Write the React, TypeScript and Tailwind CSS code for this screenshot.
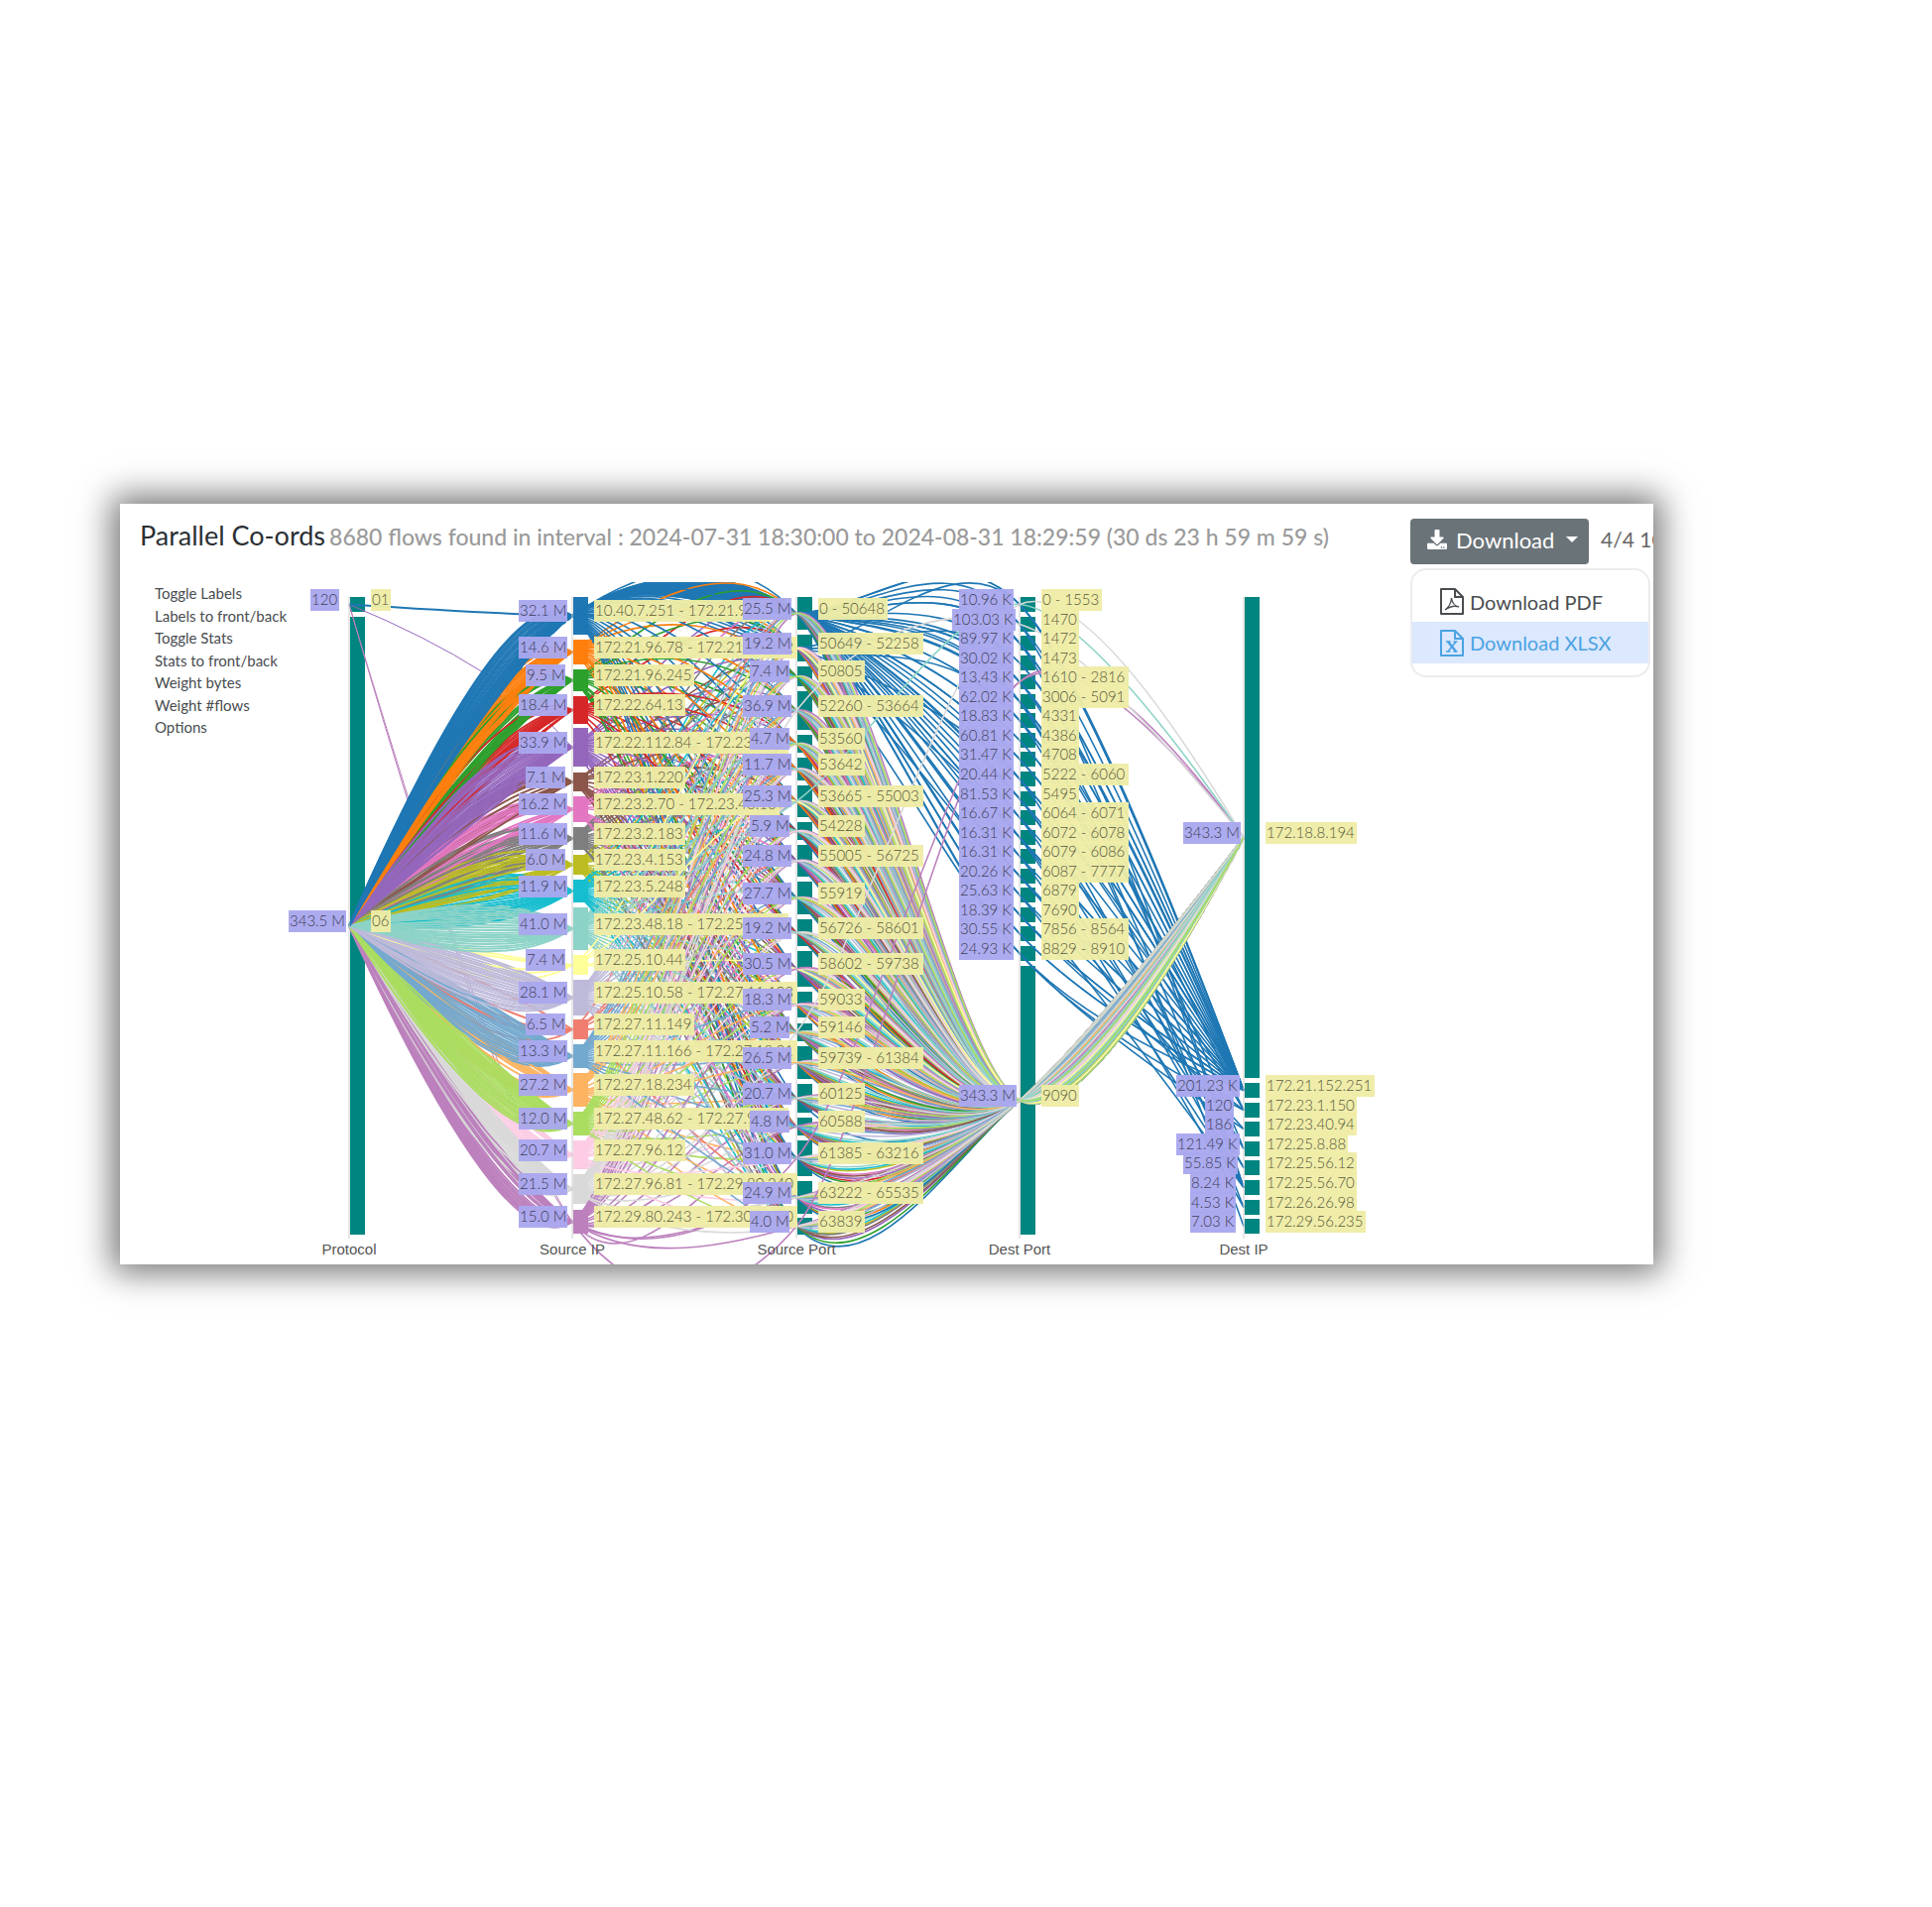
import { useState } from "react";
import { FaDownload } from "react-icons/fa";

interface AxisNode {
  y: number;
  h: number;
  value: string;
  label: string;
  color?: string;
}

interface Axis {
  title: string;
  x: number;
  nodes: AxisNode[];
}

interface Curve {
  color: string;
  d: string;
  order: number;
}

const TEAL = "#008580";

const node = (
  y: number,
  bottom: number,
  value: string,
  label: string,
  color?: string
): AxisNode => ({ y, h: bottom - y, value, label, color });

const protocols: AxisNode[] = [
  node(602, 617, "120", "01"),
  node(622, 1245, "343.5 M", "06"),
];

const sourceIps: AxisNode[] = [
  node(602, 640, "32.1 M", "10.40.7.251 - 172.21.96.7", "#1f77b4"),
  node(645, 670, "14.6 M", "172.21.96.78 - 172.21.96.242", "#ff7f0e"),
  node(675, 697, "9.5 M", "172.21.96.245", "#2ca02c"),
  node(702, 730, "18.4 M", "172.22.64.13", "#d62728"),
  node(734, 773, "33.9 M", "172.22.112.84 - 172.23.1.22", "#9467bd"),
  node(779, 798, "7.1 M", "172.23.1.220", "#8c564b"),
  node(803, 829, "16.2 M", "172.23.2.70 - 172.23.48.16", "#e377c2"),
  node(834, 857, "11.6 M", "172.23.2.183", "#7f7f7f"),
  node(862, 882, "6.0 M", "172.23.4.153", "#bcbd22"),
  node(887, 910, "11.9 M", "172.23.5.248", "#17becf"),
  node(915, 958, "41.0 M", "172.23.48.18 - 172.25.10.42", "#8dd3c7"),
  node(963, 983, "7.4 M", "172.25.10.44", "#ffff99"),
  node(988, 1024, "28.1 M", "172.25.10.58 - 172.27.11.103", "#bebada"),
  node(1028, 1048, "6.5 M", "172.27.11.149", "#f07e70"),
  node(1053, 1077, "13.3 M", "172.27.11.166 - 172.27.18.21", "#74a9cf"),
  node(1082, 1116, "27.2 M", "172.27.18.234", "#fdb462"),
  node(1121, 1145, "12.0 M", "172.27.48.62 - 172.27.96.10", "#aadd60"),
  node(1150, 1179, "20.7 M", "172.27.96.12", "#fccde5"),
  node(1184, 1214, "21.5 M", "172.27.96.81 - 172.29.80.240", "#d9d9d9"),
  node(1220, 1244, "15.0 M", "172.29.80.243 - 172.30.11.20", "#bc80bd"),
];

const sourcePorts: AxisNode[] = [
  node(602, 635, "25.5 M", "0 - 50648"),
  node(640, 667, "19.2 M", "50649 - 52258"),
  node(672, 692, "7.4 M", "50805"),
  node(697, 736, "36.9 M", "52260 - 53664"),
  node(741, 759, "4.7 M", "53560"),
  node(764, 787, "11.7 M", "53642"),
  node(792, 824, "25.3 M", "53665 - 55003"),
  node(829, 847, "5.9 M", "54228"),
  node(852, 884, "24.8 M", "55005 - 56725"),
  node(889, 922, "27.7 M", "55919"),
  node(927, 954, "19.2 M", "56726 - 58601"),
  node(959, 995, "30.5 M", "58602 - 59738"),
  node(1000, 1026, "18.3 M", "59033"),
  node(1032, 1050, "5.2 M", "59146"),
  node(1055, 1088, "26.5 M", "59739 - 61384"),
  node(1093, 1122, "20.7 M", "60125"),
  node(1127, 1145, "4.8 M", "60588"),
  node(1150, 1186, "31.0 M", "61385 - 63216"),
  node(1191, 1224, "24.9 M", "63222 - 65535"),
  node(1228, 1245, "4.0 M", "63839"),
];

const smallPorts: [string, string][] = [
  ["10.96 K", "0 - 1553"],
  ["103.03 K", "1470"],
  ["89.97 K", "1472"],
  ["30.02 K", "1473"],
  ["13.43 K", "1610 - 2816"],
  ["62.02 K", "3006 - 5091"],
  ["18.83 K", "4331"],
  ["60.81 K", "4386"],
  ["31.47 K", "4708"],
  ["20.44 K", "5222 - 6060"],
  ["81.53 K", "5495"],
  ["16.67 K", "6064 - 6071"],
  ["16.31 K", "6072 - 6078"],
  ["16.31 K", "6079 - 6086"],
  ["20.26 K", "6087 - 7777"],
  ["25.63 K", "6879"],
  ["18.39 K", "7690"],
  ["30.55 K", "7856 - 8564"],
  ["24.93 K", "8829 - 8910"],
];

const destPorts: AxisNode[] = [
  ...smallPorts.map(([value, label], i) => {
    const y = Math.round(602 + i * 19.55);
    return node(y, y + 15, value, label);
  }),
  node(974, 1245, "343.3 M", "9090"),
];

const smallIps: [string, string][] = [
  ["201.23 K", "172.21.152.251"],
  ["120", "172.23.1.150"],
  ["186", "172.23.40.94"],
  ["121.49 K", "172.25.8.88"],
  ["55.85 K", "172.25.56.12"],
  ["8.24 K", "172.25.56.70"],
  ["4.53 K", "172.26.26.98"],
  ["7.03 K", "172.29.56.235"],
];

const destIps: AxisNode[] = [
  node(602, 1087, "343.3 M", "172.18.8.194"),
  ...smallIps.map(([value, label], i) => {
    const y = Math.round(1092 + i * 19.6);
    return node(y, y + 15, value, label);
  }),
];

const axes: Axis[] = [
  { title: "Protocol", x: 353, nodes: protocols },
  { title: "Source IP", x: 578, nodes: sourceIps },
  { title: "Source Port", x: 804, nodes: sourcePorts },
  { title: "Dest Port", x: 1029, nodes: destPorts },
  { title: "Dest IP", x: 1255, nodes: destIps },
];

// small seeded generator, so the flows are the same on every render
function createRandom(seed: number) {
  let s = seed;
  return () => {
    s = (s * 1664525 + 1013904223) % 4294967296;
    return s / 4294967296;
  };
}

const TENSION = 0.15;

// cardinal spline through the centre of one node per axis, cut at the source IP
function flowPaths(stops: number[]) {
  const pts = stops.map((stop, i) => {
    const n = axes[i].nodes[stop];
    return [axes[i].x - 1, n.y + n.h / 2];
  });
  const tangent = (i: number) => [
    TENSION * (pts[i + 1][0] - pts[i - 1][0]),
    TENSION * (pts[i + 1][1] - pts[i - 1][1]),
  ];
  const r = (v: number) => v.toFixed(1);
  const last = pts.length - 1;
  let [tx, ty] = tangent(1);
  const head = `M${pts[0].join()}Q${r(pts[1][0] - tx)},${r(pts[1][1] - ty)},${pts[1].join()}`;
  let tail = `M${pts[1].join()}`;
  for (let i = 2; i < last; i++) {
    const [nx, ny] = tangent(i);
    tail += `C${r(pts[i - 1][0] + tx)},${r(pts[i - 1][1] + ty)},`;
    tail += `${r(pts[i][0] - nx)},${r(pts[i][1] - ny)},${pts[i].join()}`;
    tx = nx;
    ty = ny;
  }
  tail += `Q${r(pts[last - 1][0] + tx)},${r(pts[last - 1][1] + ty)},${pts[last].join()}`;
  return { head, tail };
}

// share of source ports that each source IP talks to, and how late it is drawn
const density = [
  1, 0.9, 0.9, 0.75, 1, 0.8, 0.7, 0.9, 0.9, 1, 1, 0.3, 1, 0.3, 1, 0.8, 1, 0.8, 1, 0.85,
];
const priority = [
  0.9, 0.5, 0.45, 0.3, 0.6, 0.3, 0.3, 0.3, 0.4, 0.4, 0.7, 0.5, 0.7, 0.4, 0.6, 0.3, 0.6, 0.2, 0.5, 0.5,
];

function buildFlows() {
  const random = createRandom(17);
  const heads: Curve[] = [];
  const tails: Curve[] = [];
  const add = (stops: number[], headOrder: number, tailOrder: number) => {
    const { head, tail } = flowPaths(stops);
    const color = sourceIps[stops[1]].color || TEAL;
    heads.push({ color, d: head, order: headOrder });
    tails.push({ color, d: tail, order: tailOrder });
  };

  sourceIps.forEach((_, ip) => {
    sourcePorts.forEach((_, port) => {
      if (random() < density[ip]) {
        const late = ip >= 10 ? 0.4 : 0;
        add([1, ip, port, 19, 0], priority[ip] + random() * 0.5, random() + late);
      }
    });
  });

  smallPorts.forEach((_, port) => {
    const ip = () => 1 + Math.floor(random() * random() * 8);
    add([1, 0, 0, port, 1], 0, 0);
    add([1, 0, port % 3 === 0 ? 1 : 0, port, ip()], 0, 0);
    if (port % 2 === 0) {
      add([1, 0, 0, port, ip()], 0, 0);
    }
  });
  add([1, 0, 0, 5, 8], 0, 0);
  add([1, 0, 0, 12, 7], 0, 0);
  add([1, 0, 0, 9, 6], 0, 0);

  add([0, 0, 0, 5, 2], 0, 0);
  add([0, 19, 16, 19, 0], -1, 0);
  add([0, 4, 16, 19, 0], -1, 0);
  add([0, 19, 19, 4, 0], -1, 2);
  add([1, 19, 17, 4, 0], 0, 2);
  add([1, 10, 6, 0, 0], 0, 2);
  add([1, 18, 13, 0, 0], 0, 2);
  add([1, 18, 3, 1, 0], 0, 2);

  const byOrder = (a: Curve, b: Curve) => a.order - b.order;
  return { heads: heads.sort(byOrder), tails: tails.sort(byOrder) };
}

const { heads, tails } = buildFlows();

function textWidth(text: string) {
  let w = 2;
  for (const ch of text) {
    if (ch === ".") w += 3;
    else if (ch === " ") w += 4;
    else if (ch === "-") w += 6;
    else if (ch === "M") w += 13;
    else if (ch === "K") w += 10;
    else w += 9;
  }
  return w;
}

function Tag({ x, y, text, fill }: { x: number; y: number; text: string; fill: string }) {
  return (
    <g>
      <rect x={x} y={y - 16} width={textWidth(text)} height={22} fill={fill} opacity={0.96} />
      <text
        x={x + 1}
        y={y}
        className="font-['Lato',sans-serif] text-[15px] font-light"
        fill="#000"
        opacity={0.65}
      >
        {text}
      </text>
    </g>
  );
}

function ParallelChart() {
  return (
    <svg
      width={1110}
      height={688}
      viewBox="290 587 1110 688"
      className="shrink-0"
      role="img"
      aria-label="Parallel coordinates of flows"
    >
      {axes.map((axis) => (
        <g key={axis.title}>
          {axis.nodes.map((n) => (
            <rect key={n.label} x={axis.x} y={n.y} width={15} height={n.h} fill={n.color || TEAL} />
          ))}
        </g>
      ))}
      <g fill="none" strokeWidth={1.6}>
        {tails.map((curve, i) => (
          <path key={i} d={curve.d} stroke={curve.color} />
        ))}
      </g>
      <g fill="none">
        {heads.map((curve, i) => (
          <path key={i} d={curve.d} stroke={curve.color} strokeWidth={curve.order < 0 ? 1 : 2} />
        ))}
      </g>
      {axes.map((axis) => (
        <g key={axis.title}>
          <line x1={axis.x - 1} x2={axis.x - 1} y1={602} y2={1249} stroke="#ccc" strokeWidth={1} />
          <text
            x={axis.x - 1}
            y={1265}
            textAnchor="middle"
            fill="#555"
            className="font-['Liberation_Sans',sans-serif] text-[15px]"
          >
            {axis.title}
          </text>
        </g>
      ))}
      {axes.map((axis) => (
        <g key={axis.title}>
          {axis.nodes.map((n) => (
            <Tag
              key={n.label}
              x={axis.x + 21}
              y={Math.round(n.y + n.h / 2)}
              text={n.label}
              fill="#eeeca6"
            />
          ))}
        </g>
      ))}
      {axes.map((axis) => (
        <g key={axis.title}>
          {axis.nodes.map((n) => {
            // plain counts carry an empty unit
            const chars = Math.max(n.value.length, 4);
            return (
              <Tag
                key={n.label}
                x={Math.floor(axis.x - 11 - chars * 7.25)}
                y={Math.round(n.y + n.h / 2)}
                text={n.value}
                fill="#aaa8ee"
              />
            );
          })}
        </g>
      ))}
    </svg>
  );
}

function PdfIcon() {
  return (
    <svg width="24" height="27" viewBox="0 0 24 27" fill="none" stroke="currentColor" strokeWidth="2">
      <path d="M1 1h14l8 8v17H1z" strokeLinejoin="round" />
      <path d="M15 1v8h8" />
      <path d="M5 22c3-2 6-7 6.5-12 .5 4 3 8 7.5 9-4-1.5-9-.5-14 3z" strokeWidth="1.3" />
    </svg>
  );
}

function XlsxIcon() {
  return (
    <svg width="24" height="27" viewBox="0 0 24 27" fill="none" stroke="currentColor" strokeWidth="2">
      <path d="M1 1h14l8 8v17H1z" strokeLinejoin="round" />
      <path d="M15 1v8h8" />
      <path d="M8 12l8 10" strokeWidth="2.5" />
      <path d="M16 12l-8 10M6 12h4.5M13.5 12h4M6 22h4.5M13.5 22h4" strokeWidth="1.5" />
    </svg>
  );
}

const chartActions = [
  "Toggle Labels",
  "Labels to front/back",
  "Toggle Stats",
  "Stats to front/back",
  "Weight bytes",
  "Weight #flows",
  "Options",
];

export default function App() {
  const [open, setOpen] = useState(true);

  return (
    <div className="min-h-screen bg-white pt-[508px] pr-[281px] pl-[121px] font-['Lato',sans-serif]">
      <div className="shadow-[0_0_32px_8px_rgba(0,0,0,0.55)]">
        <div className="overflow-hidden bg-white">
          <div className="flex h-[79px] items-start pl-5">
            <div className="flex flex-1 items-baseline gap-1 pt-[14px] whitespace-nowrap">
              <h1 className="text-[27px] leading-9 text-[#2b2f33]">Parallel Co-ords</h1>
              <span className="text-[23px] leading-9 font-medium text-[#9a9a9a]">
                8680 flows found in interval : 2024-07-31 18:30:00 to 2024-08-31 18:29:59 (30 ds 23 h 59 m 59 s)
              </span>
            </div>
            <div className="relative flex w-[245px] shrink-0 items-center pt-[15px] whitespace-nowrap">
              <button
                type="button"
                onClick={() => setOpen(!open)}
                className="flex h-[46px] w-[180px] shrink-0 items-center rounded bg-[#6a7378] pb-1 pl-4 text-[22px] text-white"
              >
                <FaDownload className="mr-2 h-5 w-[22px]" />
                Download
                <span className="ml-3 border-x-[6px] border-t-[6px] border-x-transparent border-t-white" />
              </button>
              <span className="pb-1 pl-3 text-[21px] text-[#666]">4/4 1000</span>
              {open && (
                <div className="absolute top-[65px] left-0 z-10 w-[242px] overflow-hidden rounded-2xl border-2 border-[#ebecee] bg-white pt-[11px] pb-3">
                  <button
                    type="button"
                    className="flex h-[41px] w-full items-center gap-[6px] pl-7 text-[20px] text-[#4a4d50]"
                  >
                    <PdfIcon />
                    Download PDF
                  </button>
                  <button
                    type="button"
                    className="flex h-[42px] w-full items-center gap-[6px] bg-[#dbe8fd] pl-7 text-[20px] text-[#4ba3e3]"
                  >
                    <XlsxIcon />
                    Download XLSX
                  </button>
                </div>
              )}
            </div>
          </div>
          <div className="flex items-start pl-[35px]">
            <div className="flex h-[157px] w-[134px] shrink-0 flex-col items-start justify-between">
              {chartActions.map((action) => (
                <button
                  type="button"
                  key={action}
                  className="text-[15px] leading-[22px] whitespace-nowrap text-[#484c50]"
                >
                  {action}
                </button>
              ))}
            </div>
            <ParallelChart />
          </div>
        </div>
      </div>
    </div>
  );
}
